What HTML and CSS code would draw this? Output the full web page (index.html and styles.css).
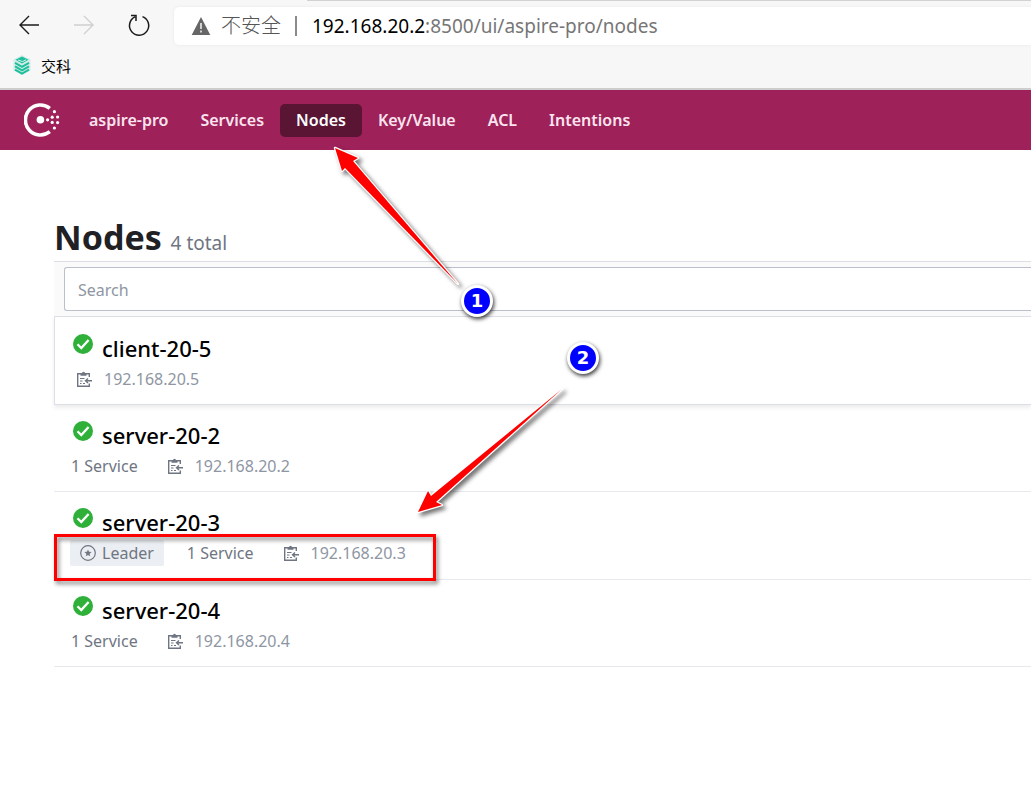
FILE: index.html
```html
<!DOCTYPE html>
<html lang="en">
<head>
<meta charset="utf-8">
<title>Nodes</title>
<link rel="stylesheet" href="styles.css">
</head>
<body>
<svg class="defs" aria-hidden="true">
  <symbol id="check" viewBox="0 0 20 20"><circle cx="10" cy="10" r="10" fill="#2eb039"/><path d="M4.5 10.3l3.8 3.8 7.3-8.1" fill="none" stroke="#fff" stroke-width="2.3"/></symbol>
  <symbol id="clip" viewBox="0 0 16 17"><path d="M13.300 6V2.700H1.700v12.600h11.600V12.500" fill="none" stroke="currentColor" stroke-width="1.400"/><path d="M4.500 4.700V2.200H6a1.500 1.500 0 0 1 3 0h1.500v2.500z" fill="currentColor"/><path d="M4 7.500h4.500M4 10h2.500M4 12.500h1.500M7 12.500h2" stroke="currentColor" stroke-width="1"/><path d="M16 9.800H10M12 7.500L9.500 9.800l2.500 2.300" fill="none" stroke="currentColor" stroke-width="1.400"/></symbol>
</svg>

<header class="browser">
  <div class="tab-edge"></div>
  <div class="toolbar">
    <button class="tool" aria-label="Back"><svg width="24" height="24" viewBox="0 0 24 24"><path d="M22 11H3M12 2l-9 9 9 9" fill="none" stroke="#1b1b1b" stroke-width="1.4"/></svg></button>
    <button class="tool" aria-label="Forward" disabled><svg width="24" height="24" viewBox="0 0 24 24"><path d="M2 11h19M12 2l9 9-9 9" fill="none" stroke="#d0d0d0" stroke-width="1.4"/></svg></button>
    <button class="tool" aria-label="Reload"><svg width="24" height="24" viewBox="0 0 24 24"><path d="M15.5 2.600A9.6 9.6 0 1 1 8 2.900M4 1.500h5v5.500" fill="none" stroke="#1b1b1b" stroke-width="1.5"/></svg></button>
    <div class="address">
      <svg width="20" height="20" viewBox="0 0 20 20"><path d="M10 1l9.3 18H.7z" fill="#666"/><path d="M10 7v6M10 14.5v2" stroke="#fff" stroke-width="1.4"/></svg>
      <span class="insecure">不安全</span>
      <span class="divider"></span>
      <span class="url"><span class="host">192.168.20.2</span>:8500/ui/aspire-pro/nodes</span>
    </div>
  </div>
  <a class="bookmark" href="#">
    <svg width="20" height="20" viewBox="0 0 20 20"><path d="M10 0l8.500 4.500v11L10 20l-8.500-4.500v-11z" fill="#d3ece7"/><path d="M10 1.500l6.500 3.300-6.500 3.700-6.500-3.700z" fill="#1dbf9c"/><path d="M3 7.800L10 11.800l7-4M3 11.300l7 4 7-4M3 14.600l7 3.900 7-3.900" fill="none" stroke="#1dbf9c" stroke-width="2"/><path d="M6 5l4.500 1.600L14 4.800" fill="none" stroke="#d9f3ee" stroke-width="1"/></svg>
    交科
  </a>
</header>

<nav class="nav">
  <a class="logo" href="#" aria-label="Consul"><svg width="36" height="34" viewBox="0 0 36 34"><path d="M25.8 5.3A15 15 0 1 0 25.8 28.7" fill="none" stroke="#fff" stroke-width="3.6"/><g fill="#fff"><circle cx="16.4" cy="16.8" r="3.8"/><circle cx="23.6" cy="16.8" r="1.6"/><circle cx="28.2" cy="14.2" r="1.6"/><circle cx="28.2" cy="19.4" r="1.6"/><circle cx="30.4" cy="8.7" r="1.6"/><circle cx="30.4" cy="25" r="1.6"/><circle cx="33.6" cy="14" r="1.6"/><circle cx="33.6" cy="19.6" r="1.6"/></g></svg></a>
  <a class="nav-link" href="#">aspire-pro</a>
  <a class="nav-link" href="#">Services</a>
  <a class="nav-link active" href="#">Nodes</a>
  <a class="nav-link" href="#">Key/Value</a>
  <a class="nav-link" href="#">ACL</a>
  <a class="nav-link" href="#">Intentions</a>
</nav>

<main class="main">
  <h1 class="title">Nodes <span class="total">4 total</span></h1>
  <div class="filter"><input class="search" type="text" placeholder="Search" aria-label="Search"></div>
  <ul class="list">
    <li class="node raised">
      <a class="name" href="#"><svg class="check" width="20" height="20"><use href="#check"/></svg>client-20-5</a>
      <div class="meta"><span class="ip"><svg width="16" height="17"><use href="#clip"/></svg>192.168.20.5</span></div>
    </li>
    <li class="node">
      <a class="name" href="#"><svg class="check" width="20" height="20"><use href="#check"/></svg>server-20-2</a>
      <div class="meta"><span>1 Service</span><span class="ip"><svg width="16" height="17"><use href="#clip"/></svg>192.168.20.2</span></div>
    </li>
    <li class="node with-leader">
      <a class="name" href="#"><svg class="check" width="20" height="20"><use href="#check"/></svg>server-20-3</a>
      <div class="meta"><span class="leader"><svg width="16" height="16" viewBox="0 0 16 16"><circle cx="8" cy="8" r="7.3" fill="none" stroke="currentColor" stroke-width="1.2"/><path d="M8 4.4l1 2.4 2.6.2-2 1.7.6 2.5L8 9.9l-2.2 1.3.6-2.5-2-1.7 2.6-.2z" fill="currentColor"/></svg>Leader</span><span>1 Service</span><span class="ip"><svg width="16" height="17"><use href="#clip"/></svg>192.168.20.3</span></div>
      <div class="highlight"></div>
    </li>
    <li class="node">
      <a class="name" href="#"><svg class="check" width="20" height="20"><use href="#check"/></svg>server-20-4</a>
      <div class="meta"><span>1 Service</span><span class="ip"><svg width="16" height="17"><use href="#clip"/></svg>192.168.20.4</span></div>
    </li>
  </ul>
</main>

<svg class="arrows" width="620" height="540" viewBox="0 0 620 540" aria-hidden="true">
  <g stroke-linejoin="round">
    <g fill="#fff" stroke="#fff" stroke-width="2.5">
      <path d="M335 148L358 158 353 161 458 284 345 168 342 171z"/>
      <path d="M418 512L428 491 431 496 562 389 436 502 442 505z"/>
    </g>
    <g fill="#f00">
      <path d="M335 148L358 158 353 161 458 284 345 168 342 171z"/>
      <path d="M418 512L428 491 431 496 562 389 436 502 442 505z"/>
    </g>
  </g>
</svg>
<span class="marker one">1</span>
<span class="marker two">2</span>
</body>
</html>
```
FILE: styles.css
```css
* { box-sizing: border-box; }
body {
  margin: 0;
  min-height: 100vh;
  position: relative;
  overflow-x: hidden;
  background: #fff;
  font-family: "Noto Sans", "Noto Sans CJK SC", sans-serif;
  font-size: 16px;
}
a { color: inherit; text-decoration: none; }
svg { flex: none; }
.defs { position: absolute; width: 0; height: 0; }

.browser {
  height: 90px;
  background: #f7f7f7;
  border-bottom: 2px solid #cecece;
}
.tab-edge { height: 1px; margin-left: 307px; background: #d2d2d2; }
.toolbar { display: flex; align-items: center; height: 49px; padding-left: 17px; }
.tool {
  display: flex;
  width: 24px;
  padding: 0;
  margin-right: 31px;
  border: 0;
  background: none;
}
.address {
  flex: 1;
  display: flex;
  align-items: center;
  height: 38px;
  margin-left: -8px;
  padding-left: 17px;
  background: #fff;
  border-radius: 5px 0 0 5px;
  box-shadow: 0 0 3px #e6e6e6;
}
.insecure { margin-left: 10px; font-size: 20px; font-weight: 300; color: #555; line-height: 24px; }
.divider { width: 2px; height: 20px; margin: 0 15px 0 14px; background: #8a8a8a; }
.url { font-size: 19px; color: #767676; white-space: nowrap; }
.host { color: #000; }
.bookmark {
  display: inline-flex;
  align-items: center;
  gap: 9px;
  height: 30px;
  padding-left: 12px;
  font-size: 15px;
  color: #000;
}

.nav {
  display: flex;
  align-items: center;
  height: 60px;
  padding-left: 24px;
  background: #9e2159;
  color: #fbe4ef;
}
.logo { display: flex; margin-right: 13px; }
.nav-link {
  padding: 0 16px;
  line-height: 33px;
  border-radius: 5px;
  font-size: 16px;
  font-weight: 600;
}
.active { background: #5a1434; color: #fff; }

.main { padding: 62px 0 0 54px; }
.title {
  margin: 0;
  height: 49px;
  line-height: 50px;
  font-size: 34px;
  font-weight: 700;
  color: #1f2124;
}
.total { font-size: 19px; font-weight: 400; color: #6f7682; }
.filter {
  padding: 5px 0 5px 10px;
  background: #fafafa;
  border-top: 1px solid #dcdee5;
}
.search {
  display: block;
  width: 100%;
  height: 44px;
  padding: 2px 13px 0;
  border: 1px solid #bac1cc;
  border-right: 0;
  border-radius: 3px 0 0 3px;
  background: #fff;
  font: inherit;
}
.search::placeholder { color: #8e96a3; opacity: 1; }
.list { margin: 0; padding: 0; list-style: none; }
.node {
  position: relative;
  height: 87px;
  padding: 12px 0 0 17px;
  border-bottom: 1px solid #e8e9ee;
}
.raised {
  height: 89px;
  border: 1px solid #dcdee8;
  border-right: 0;
  padding: 13px 0 0 16px;
  box-shadow: 0 3px 4px #eee;
}
.with-leader { height: 88px; }
.name {
  display: flex;
  gap: 9px;
  height: 36px;
  padding-left: 2px;
  line-height: 36px;
  font-size: 22px;
  font-weight: 500;
  color: #000;
}
.check { margin-top: 4px; }
.meta {
  display: flex;
  align-items: center;
  gap: 29px;
  height: 26px;
  color: #6f7682;
}
.ip { display: flex; align-items: center; gap: 12px; color: #8e96a3; }
.ip svg { color: #6f7682; }
.raised .ip { padding-left: 5px; }
.leader {
  display: flex;
  align-items: center;
  gap: 6px;
  height: 26px;
  margin: 0 -6px 0 -1px;
  padding: 0 10px;
  border-radius: 2px;
  background: #ebeef2;
}
.highlight {
  position: absolute;
  left: 0;
  top: 42px;
  width: 382px;
  height: 47px;
  border: 3px solid #f00;
  filter: drop-shadow(2px 3px 2px rgba(0, 0, 0, .5));
}
.arrows { position: absolute; left: 0; top: 0; pointer-events: none; filter: drop-shadow(3px 3px 2px rgba(0, 0, 0, .55)); }
.marker {
  position: absolute;
  width: 32px;
  height: 32px;
  border: 3px solid #fff;
  border-radius: 50%;
  background: #00f;
  color: #fff;
  font: bold 18px/26px "DejaVu Sans", sans-serif;
  text-align: center;
  box-shadow: 1px 2px 4px rgba(0, 0, 0, .8);
}
.one { left: 461px; top: 285px; }
.two { left: 567px; top: 342px; }
```
